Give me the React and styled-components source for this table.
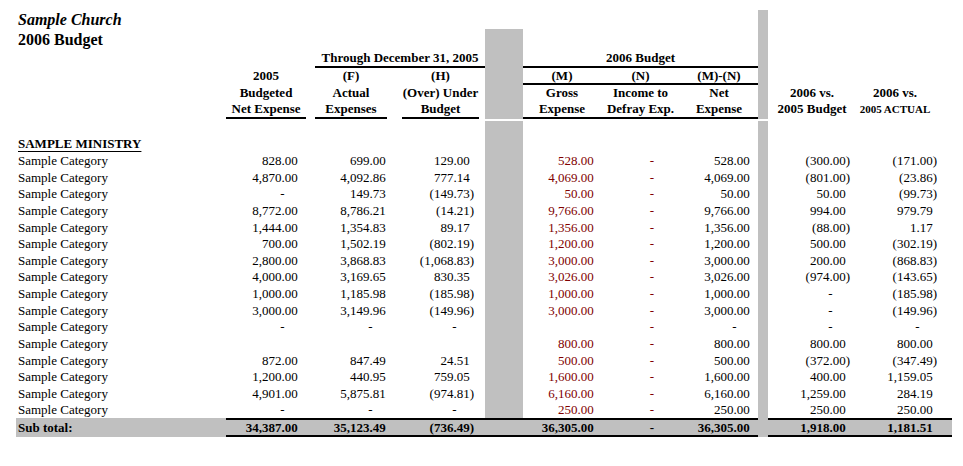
import React from "react"
import styled, { createGlobalStyle } from "styled-components"

const GRID = "210px 84px 85px 90px 38px 78px 79px 78px 10px 88px 96px"
const GRAY = "#c0c0c0"
const RED = "#800000"

// right padding of each amount column, so the digits line up like the sheet
const COLS = [
  { pr: 8 },
  { pr: 5 },
  { pr: 11 },
  { pr: 3, red: true },
  { pr: 8.5, red: true },
  { pr: 4 },
  { pr: 6 },
  { pr: 15 },
]

const ROWS = [
  ["828.00", "699.00", "129.00", "528.00", "-", "528.00", "(300.00)", "(171.00)"],
  ["4,870.00", "4,092.86", "777.14", "4,069.00", "-", "4,069.00", "(801.00)", "(23.86)"],
  ["-", "149.73", "(149.73)", "50.00", "-", "50.00", "50.00", "(99.73)"],
  ["8,772.00", "8,786.21", "(14.21)", "9,766.00", "-", "9,766.00", "994.00", "979.79"],
  ["1,444.00", "1,354.83", "89.17", "1,356.00", "-", "1,356.00", "(88.00)", "1.17"],
  ["700.00", "1,502.19", "(802.19)", "1,200.00", "-", "1,200.00", "500.00", "(302.19)"],
  ["2,800.00", "3,868.83", "(1,068.83)", "3,000.00", "-", "3,000.00", "200.00", "(868.83)"],
  ["4,000.00", "3,169.65", "830.35", "3,026.00", "-", "3,026.00", "(974.00)", "(143.65)"],
  ["1,000.00", "1,185.98", "(185.98)", "1,000.00", "-", "1,000.00", "-", "(185.98)"],
  ["3,000.00", "3,149.96", "(149.96)", "3,000.00", "-", "3,000.00", "-", "(149.96)"],
  ["-", "-", "-", "", "-", "-", "-", "-"],
  ["", "", "", "800.00", "-", "800.00", "800.00", "800.00"],
  ["872.00", "847.49", "24.51", "500.00", "-", "500.00", "(372.00)", "(347.49)"],
  ["1,200.00", "440.95", "759.05", "1,600.00", "-", "1,600.00", "400.00", "1,159.05"],
  ["4,901.00", "5,875.81", "(974.81)", "6,160.00", "-", "6,160.00", "1,259.00", "284.19"],
  ["-", "-", "-", "250.00", "-", "250.00", "250.00", "250.00"],
]

const TOTAL = ["34,387.00", "35,123.49", "(736.49)", "36,305.00", "-", "36,305.00", "1,918.00", "1,181.51"]

const GlobalStyle = createGlobalStyle`
  body {
    margin: 0;
    background: #fff;
    color: #000;
    font-family: "Liberation Serif", "Times New Roman", serif;
  }
`

const Page = styled.div`
  width: 963px;
  height: 466px;
  box-sizing: border-box;
  padding: 10px 0 0 16px;
  overflow: hidden;
`

const Row = styled.div`
  display: grid;
  grid-template-columns: ${GRID};
  width: 936px;
  align-items: start;
  height: ${(p) => p.$h}px;
  line-height: ${(p) => p.$lh ?? p.$h}px;
  font-size: 13px;
  ${(p) => p.$total && `background: ${GRAY}; font-weight: bold;`}
`

const Title = styled.div`
  grid-column: span 4;
  font-size: 16px;
  font-weight: bold;
  font-style: ${(p) => (p.$italic ? "italic" : "normal")};
  padding-left: 2px;
  white-space: nowrap;
`

const Empty = styled.div`
  grid-column: span ${(p) => p.$span || 1};
`

const Band = styled.div`
  align-self: stretch;
  box-sizing: border-box;
  background: ${(p) => (p.$on ? GRAY : "transparent")};
  ${(p) => p.$boxed && "border-top: 2px solid #000; border-bottom: 2px solid #000;"}
`

const Group = styled.div`
  grid-column: span ${(p) => p.$span};
  align-self: stretch;
  box-sizing: border-box;
  margin-left: ${(p) => p.$ml || 0}px;
  border-bottom: 2px solid #000;
  text-align: center;
  font-weight: bold;
  white-space: nowrap;
`

const Head = styled.div`
  margin: 0 ${(p) => p.$mr || 0}px 0 ${(p) => p.$ml || 0}px;
  padding-right: ${(p) => p.$pr || 0}px;
  text-align: center;
  font-weight: bold;
  font-size: ${(p) => (p.$small ? 11 : 13)}px;
  white-space: nowrap;
  ${(p) => p.$rule && "align-self: stretch; box-sizing: border-box; border-bottom: 2px solid #000;"}
`

const Label = styled.div`
  padding: ${(p) => (p.$top || 0)}px 0 0 2px;
  white-space: nowrap;
`

const Section = styled(Label)`
  font-weight: bold;
  text-decoration: underline;
  text-underline-offset: 3px;
`

const Amount = styled.div`
  padding-top: ${(p) => (p.$boxed ? 0 : 1)}px;
  padding-right: ${(p) => p.$pr}px;
  text-align: right;
  white-space: nowrap;
  color: ${(p) => (p.$red ? RED : "inherit")};
  ${(p) => p.$boxed && "align-self: stretch; box-sizing: border-box; border-top: 2px solid #000; border-bottom: 2px solid #000;"}
`

const Ghost = styled.span`
  visibility: hidden;
`

// accounting format: keep room for ")" on positives, "-" sits left of the decimals
function Value({ v }) {
  if (!v) return null
  if (v === "-") return <>-<Ghost>00)</Ghost></>
  if (v.startsWith("(")) return v
  return <>{v}<Ghost>)</Ghost></>
}

const INSET = [
  { $ml: 0, $mr: 4 },
  { $ml: 5, $mr: 8 },
  { $ml: 7, $mr: 6 },
]

function AmountRow({ label, values, total }) {
  const cell = (i) => (
    <Amount key={i} $pr={COLS[i].pr} $red={!total && COLS[i].red} $boxed={total}>
      <Value v={values[i]} />
    </Amount>
  )
  return (
    <Row $h={total ? 19 : 16.625} $lh={total ? 15 : 16} $total={total}>
      <Label $top={total ? 2 : 1}>{label}</Label>
      {cell(0)}
      {cell(1)}
      {cell(2)}
      <Band $on $boxed={total} />
      {cell(3)}
      {cell(4)}
      {cell(5)}
      <Band $on />
      {cell(6)}
      {cell(7)}
    </Row>
  )
}

export default function App() {
  return (
    <Page>
      <GlobalStyle />

      <Row $h={19}>
        <Title $italic>Sample Church</Title>
        <Band />
        <Empty $span={3} />
        <Band $on />
        <Empty $span={2} />
      </Row>
      <Row $h={21}>
        <Title>2006 Budget</Title>
        <Band $on />
        <Empty $span={3} />
        <Band $on />
        <Empty $span={2} />
      </Row>

      <Row $h={18} $lh={16}>
        <Empty $span={2} />
        <Group $span={2} $ml={5}>Through December 31, 2005</Group>
        <Band $on />
        <Group $span={3}>2006 Budget</Group>
        <Band $on />
        <Empty $span={2} />
      </Row>
      <Row $h={17} $lh={15}>
        <Empty />
        <Head {...INSET[0]}>2005</Head>
        <Head {...INSET[1]}>(F)</Head>
        <Head {...INSET[2]}>(H)</Head>
        <Band $on />
        <Head $rule>(M)</Head>
        <Head $rule>(N)</Head>
        <Head $rule>(M)-(N)</Head>
        <Band $on />
        <Empty $span={2} />
      </Row>
      <Row $h={16}>
        <Empty />
        <Head {...INSET[0]}>Budgeted</Head>
        <Head {...INSET[1]}>Actual</Head>
        <Head {...INSET[2]}>(Over) Under</Head>
        <Band $on />
        <Head>Gross</Head>
        <Head>Income to</Head>
        <Head>Net</Head>
        <Band $on />
        <Head>2006 vs.</Head>
        <Head $pr={18}>2006 vs.</Head>
      </Row>
      <Row $h={18} $lh={16}>
        <Empty />
        <Head {...INSET[0]} $rule>Net Expense</Head>
        <Head {...INSET[1]} $rule>Expenses</Head>
        <Head {...INSET[2]} $rule>Budget</Head>
        <Band $on />
        <Head $rule>Expense</Head>
        <Head $rule>Defray Exp.</Head>
        <Head $rule>Expense</Head>
        <Band $on />
        <Head>2005 Budget</Head>
        <Head $pr={18} $small>2005 ACTUAL</Head>
      </Row>

      <Row $h={2} />
      <Row $h={14}>
        <Empty $span={4} />
        <Band $on />
        <Empty $span={3} />
        <Band $on />
        <Empty $span={2} />
      </Row>
      <Row $h={17}>
        <Section>SAMPLE MINISTRY</Section>
        <Empty $span={3} />
        <Band $on />
        <Empty $span={3} />
        <Band $on />
        <Empty $span={2} />
      </Row>

      {ROWS.map((values, i) => (
        <AmountRow key={i} label="Sample Category" values={values} />
      ))}
      <AmountRow label="Sub total:" values={TOTAL} total />
    </Page>
  )
}
